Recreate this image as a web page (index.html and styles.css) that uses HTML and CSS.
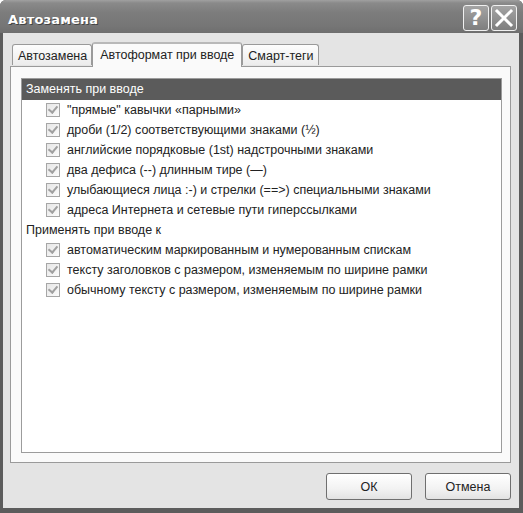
FILE: index.html
```html
<!DOCTYPE html>
<html>
<head>
<meta charset="utf-8">
<link rel="stylesheet" href="styles.css">
</head>
<body>
<div class="window">
  <div class="titlebar">
    <span class="title">Автозамена</span>
    <div class="tb-buttons">
      <div class="tb-btn">?</div>
      <div class="tb-btn close">
        <svg width="22" height="22" viewBox="0 0 22 22"><path d="M4 4 L18 18 M18 4 L4 18" stroke="#fff" stroke-width="3" stroke-linecap="square"/></svg>
      </div>
    </div>
  </div>
  <div class="body">
    <div class="tabs">
      <div class="tab">Автозамена</div>
      <div class="tab active">Автоформат при вводе</div>
      <div class="tab">Смарт-теги</div>
    </div>
    <div class="panel">
      <div class="list">
        <div class="group-header">Заменять при вводе</div>
        <div class="row"><span class="cb"></span><span>"прямые" кавычки «парными»</span></div>
        <div class="row"><span class="cb"></span><span>дроби (1/2) соответствующими знаками (½)</span></div>
        <div class="row"><span class="cb"></span><span>английские порядковые (1st) надстрочными знаками</span></div>
        <div class="row"><span class="cb"></span><span>два дефиса (--) длинным тире (—)</span></div>
        <div class="row"><span class="cb"></span><span>улыбающиеся лица :-) и стрелки (==&gt;) специальными знаками</span></div>
        <div class="row"><span class="cb"></span><span>адреса Интернета и сетевые пути гиперссылками</span></div>
        <div class="group-label">Применять при вводе к</div>
        <div class="row"><span class="cb"></span><span>автоматическим маркированным и нумерованным спискам</span></div>
        <div class="row"><span class="cb"></span><span>тексту заголовков с размером, изменяемым по ширине рамки</span></div>
        <div class="row"><span class="cb"></span><span>обычному тексту с размером, изменяемым по ширине рамки</span></div>
      </div>
    </div>
    <div class="buttons">
      <button class="btn">ОК</button>
      <button class="btn">Отмена</button>
    </div>
  </div>
</div>
</body>
</html>
```
FILE: styles.css
```css
html, body {
  margin: 0;
  padding: 0;
  background: #fff;
}
.window {
  width: 523px;
  height: 513px;
  box-sizing: border-box;
  display: flex;
  flex-direction: column;
  background: #5c5c5c;
  border-radius: 6px 6px 0 0;
  overflow: hidden;
  font-family: "Liberation Sans", Arial, sans-serif;
}
.titlebar {
  height: 33px;
  flex: none;
  display: flex;
  align-items: center;
  justify-content: space-between;
  padding: 0 6px 0 8px;
  background: linear-gradient(#a0a0a0 0px, #8a8a8a 3px, #7d7d7d 12px, #767676 26px, #6e6e6e 33px);
}
.title {
  color: #fff;
  font-family: "DejaVu Sans", sans-serif;
  font-weight: bold;
  font-size: 13px;
  letter-spacing: 0.2px;
  text-shadow: 1px 1px 0 #444;
  margin-top: 6px;
}
.tb-buttons {
  display: flex;
  gap: 2px;
  margin-top: 2px;
}
.tb-btn {
  width: 24px;
  height: 24px;
  border: 1px solid #f0f0f0;
  border-radius: 3px;
  background: linear-gradient(#a4a4a4, #7e7e7e);
  color: #fff;
  font-family: "DejaVu Sans", sans-serif;
  font-weight: bold;
  font-size: 22px;
  line-height: 24px;
  text-align: center;
  display: flex;
  align-items: center;
  justify-content: center;
}
.body {
  flex: 1;
  margin: 0 4px 5px 3px;
  background: #e4e4e4;
  padding: 9px 8px 0 7px;
  display: flex;
  flex-direction: column;
  color: #222;
}
.tabs {
  display: flex;
  align-items: flex-end;
  padding-left: 2px;
  height: 24px;
  position: relative;
  z-index: 1;
}
.tab {
  height: 21px;
  box-sizing: border-box;
  border: 1px solid #9a9a9a;
  border-bottom: none;
  border-radius: 3px 3px 0 0;
  background: linear-gradient(#fdfdfd, #ececec);
  font-size: 12.5px;
  padding: 3px 4px 0 5px;
  line-height: 16px;
  margin-bottom: 1px;
}
.tab.active {
  height: 25px;
  margin-bottom: -1px;
  background: #fafafa;
  padding: 3px 7px 0 7px;
  border-top: 2px solid #b8b8b8;
}
.panel {
  height: 397px;
  box-sizing: border-box;
  border: 1px solid #9a9a9a;
  background: #fafafa;
  padding: 11px 8px 9px 10px;
}
.list {
  height: 100%;
  box-sizing: border-box;
  border: 1px solid #9c9c9c;
  background: #fff;
}
.group-header {
  height: 21px;
  background: #5b5b5b;
  color: #fff;
  font-size: 12.5px;
  line-height: 21px;
  padding-left: 4px;
}
.row {
  height: 20px;
  display: flex;
  align-items: center;
  padding-left: 24px;
  font-size: 12.5px;
  gap: 7px;
}
.group-label {
  height: 20px;
  line-height: 20px;
  padding-left: 4px;
  font-size: 12.5px;
}
.cb {
  width: 12px;
  height: 12px;
  flex: none;
  border: 1px solid #a6a6a6;
  background: linear-gradient(135deg, #e6e6e6, #fbfbfb);
  position: relative;
}
.cb::after {
  content: "";
  position: absolute;
  left: 3px;
  top: 0px;
  width: 4px;
  height: 7px;
  border: solid #a0a0a0;
  border-width: 0 2px 2px 0;
  transform: rotate(40deg);
}
.buttons {
  display: flex;
  justify-content: flex-end;
  gap: 13px;
  padding-top: 10px;
  padding-right: 0;
}
.btn {
  width: 86px;
  height: 27px;
  border: 1px solid #6f6f6f;
  border-radius: 3px;
  background: linear-gradient(#ffffff, #f2f2f2 60%, #e2e2e2);
  font-family: "Liberation Sans", Arial, sans-serif;
  font-size: 12.5px;
  color: #222;
  padding: 0;
}
```
